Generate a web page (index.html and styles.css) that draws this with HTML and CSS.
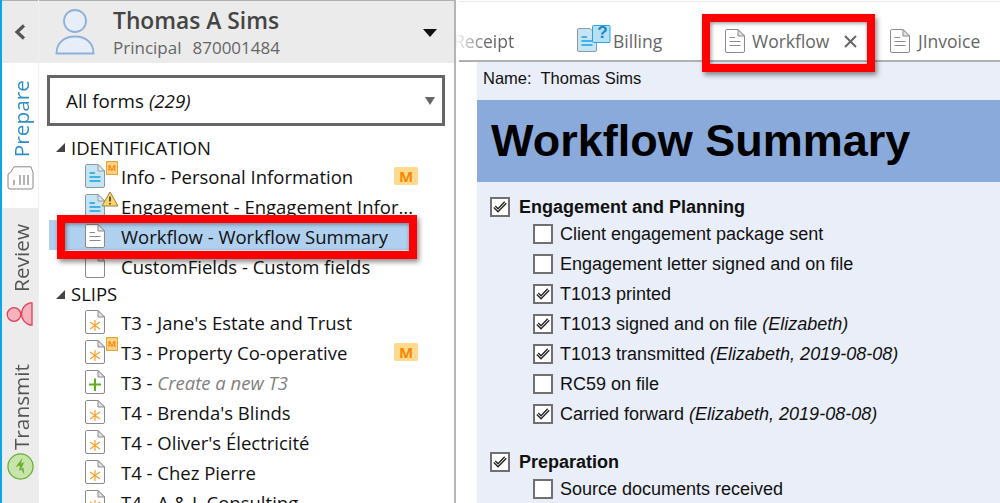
FILE: index.html
```html
<!DOCTYPE html>
<html lang="en">
<head>
<meta charset="utf-8">
<title>Workflow Summary</title>
<link rel="stylesheet" href="styles.css">
</head>
<body>
<svg class="defs" width="0" height="0" aria-hidden="true">
  <symbol id="page" viewBox="0 0 20 24"><path d="M1.500.5H13L19.500 7V22a1.500 1.500 0 0 1-1.500 1.500H2A1.500 1.500 0 0 1 .5 22V2A1.500 1.500 0 0 1 1.500.5Z" fill="#fff" stroke="#8a8a8a"/><path d="M13 .5V7H19.500Z" fill="#e4e4e4" stroke="#8a8a8a"/></symbol>
  <symbol id="page-lines" viewBox="0 0 20 24"><use href="#page"/><path d="M4.500 8.500H10M4.500 12.500H15.500M4.500 16.500H15.500" stroke="#8a8a8a" fill="none"/></symbol>
  <symbol id="page-blue" viewBox="0 0 20 24"><path d="M1.500.5H13L19.500 7V22a1.500 1.500 0 0 1-1.500 1.500H2A1.500 1.500 0 0 1 .5 22V2A1.500 1.500 0 0 1 1.500.5Z" fill="#c5e5f5" stroke="#8a9aa5"/><path d="M13 .5V7H19.500Z" fill="#e8e8e8" stroke="#8a9aa5"/><path d="M4.500 9H10M4.500 13H15.500M4.500 17H15.500" stroke="#19a0e0" stroke-width="1.300" fill="none"/></symbol>
  <symbol id="page-star" viewBox="0 0 20 24"><use href="#page"/><path d="M10 10V21M5 12L15 19M15 12L5 19" stroke="#f8a030" stroke-width="1.200" fill="none"/></symbol>
  <symbol id="page-plus" viewBox="0 0 20 24"><use href="#page"/><path d="M10 8.500V21M4 14.500H16" stroke="#5fae1e" stroke-width="2" fill="none"/></symbol>
  <symbol id="check" viewBox="0 0 14 12"><path d="M.8 6.500 5 10.800 13.300 2.200M2.300 5 5 7.700 11.700 .7" stroke="#222" stroke-width="1.300" fill="none"/></symbol>
</svg>

<div class="app">
  <nav class="rail">
    <button class="back" aria-label="Back">
      <svg width="12" height="16" viewBox="0 0 12 16"><path d="M10 1.500 3 8 10 14.500" fill="none" stroke="#555" stroke-width="3.200"/></svg>
    </button>
    <div class="rail-tab active">
      <span class="vtext">Prepare</span>
      <svg class="rail-icon" width="27" height="24" viewBox="0 0 27 24"><path d="M3.500 6.500 7 .8H24L26 6.500V21a2 2 0 0 1-2 2H3a2 2 0 0 1-2-2V8Z" fill="#fff" stroke="#888"/><path d="M7 19V14M13 19V9M17 19V9M21 19V9" stroke="#999" stroke-width="1.500" fill="none"/></svg>
    </div>
    <div class="rail-tab review">
      <span class="vtext">Review</span>
      <svg class="rail-icon" width="28" height="24" viewBox="0 0 28 24"><circle cx="8" cy="12.500" r="6.800" fill="#f6b2bd" stroke="#df4057" stroke-width="1.300"/><path d="M26 .8V23H24A11.500 11.500 0 0 1 24 .8Z" fill="#f6b2bd" stroke="#df4057" stroke-width="1.300"/></svg>
    </div>
    <div class="rail-tab transmit">
      <span class="vtext">Transmit</span>
      <svg class="rail-icon" width="27" height="27" viewBox="0 0 28 28"><circle cx="14" cy="14" r="13" fill="#c6e4ab" stroke="#6cae2e" stroke-width="1.300"/><path d="M16 5 9 14.500 13.500 13 12.500 18.500 15 17 18 22.500 17 15 14.500 16.500 18 9.500 14.500 11Z" fill="#6cae2e"/></svg>
    </div>
  </nav>

  <aside class="sidebar">
    <header class="client">
      <svg class="avatar" width="40" height="46" viewBox="0 0 40 46"><circle cx="20" cy="12" r="11" fill="#e8eef8" stroke="#8db0dc" stroke-width="1.800"/><path d="M1.500 44.500C1.500 33 10 27.500 20 27.500S38.500 33 38.500 44.500Z" fill="#e8eef8" stroke="#8db0dc" stroke-width="1.800"/></svg>
      <div class="client-text">
        <div class="client-name">Thomas A Sims</div>
        <div class="client-sub"><span>Principal</span><span>870001484</span></div>
      </div>
      <span class="client-caret"></span>
    </header>

    <div class="select">All forms <em>(229)</em><span class="select-caret"></span></div>

    <div class="tree">
      <div class="group"><span class="twist"></span>IDENTIFICATION</div>
      <div class="row"><span class="ico"><svg width="20" height="24"><use href="#page-blue"/></svg><span class="mini-m">M</span></span><span class="label">Info - Personal Information</span><span class="badge-m">M</span></div>
      <div class="row"><span class="ico"><svg width="20" height="24"><use href="#page-blue"/></svg><svg class="warn" width="18" height="16" viewBox="0 0 18 16"><path d="M9 1 17 15H1Z" fill="#ffd466" stroke="#9a8240" stroke-linejoin="round"/><path d="M9 5.500V10.500M9 12V13.500" stroke="#333" stroke-width="1.500"/></svg></span><span class="label">Engagement - Engagement Infor...</span></div>
      <div class="row selected"><span class="ico"><svg width="20" height="24"><use href="#page-lines"/></svg></span><span class="label">Workflow - Workflow Summary</span></div>
      <div class="row"><span class="ico"><svg width="20" height="24"><use href="#page"/></svg></span><span class="label">CustomFields - Custom fields</span></div>
      <div class="group slips"><span class="twist"></span>SLIPS</div>
      <div class="row"><span class="ico"><svg width="20" height="24"><use href="#page-star"/></svg></span><span class="label">T3 - Jane's Estate and Trust</span></div>
      <div class="row"><span class="ico"><svg width="20" height="24"><use href="#page-star"/></svg><span class="mini-m">M</span></span><span class="label">T3 - Property Co-operative</span><span class="badge-m">M</span></div>
      <div class="row"><span class="ico"><svg width="20" height="24"><use href="#page-plus"/></svg></span><span class="label">T3 - <em class="new">Create a new T3</em></span></div>
      <div class="row"><span class="ico"><svg width="20" height="24"><use href="#page-star"/></svg></span><span class="label">T4 - Brenda's Blinds</span></div>
      <div class="row"><span class="ico"><svg width="20" height="24"><use href="#page-star"/></svg></span><span class="label">T4 - Oliver's Électricité</span></div>
      <div class="row"><span class="ico"><svg width="20" height="24"><use href="#page-star"/></svg></span><span class="label">T4 - Chez Pierre</span></div>
      <div class="row"><span class="ico"><svg width="20" height="24"><use href="#page-star"/></svg></span><span class="label">T4 - A &amp; L Consulting</span></div>
    </div>
  </aside>

  <main class="main">
    <div class="tabs">
      <div class="tab receipt">Receipt</div>
      <div class="tab billing">
        <span class="ico-billing"><svg width="34" height="28" viewBox="0 0 34 28"><path d="M1.500 3.500H13L19.500 10V25a1.500 1.500 0 0 1-1.500 1.500H2A1.500 1.500 0 0 1 .5 25V5A1.500 1.500 0 0 1 1.500 3.500Z" fill="#c5e5f5" stroke="#8a9aa5"/><path d="M4.500 12H10M4.500 16H15.500M4.500 20H15.500" stroke="#19a0e0" stroke-width="1.300"/><rect x="15.500" y=".5" width="17.500" height="17" rx="1" fill="#b5e0f5" stroke="#2aa5e0"/></svg><span class="q">?</span></span>
        Billing
      </div>
      <div class="tab workflow"><svg width="20" height="24"><use href="#page-lines"/></svg><span>Workflow</span><svg class="close" width="13" height="13" viewBox="0 0 13 13"><path d="M1 1 12 12M12 1 1 12" stroke="#666" stroke-width="2"/></svg></div>
      <div class="tab jinvoice"><svg width="20" height="24"><use href="#page-lines"/></svg><span>JInvoice</span></div>
    </div>

    <div class="sheet">
      <div class="name-line">Name:&nbsp; Thomas Sims</div>
      <h1 class="banner">Workflow Summary</h1>

      <section class="section">
        <div class="check-group"><span class="cb on"><svg width="14" height="12"><use href="#check"/></svg></span>Engagement and Planning</div>
        <div class="check-item"><span class="cb"></span>Client engagement package sent</div>
        <div class="check-item"><span class="cb"></span>Engagement letter signed and on file</div>
        <div class="check-item"><span class="cb on"><svg width="14" height="12"><use href="#check"/></svg></span>T1013 printed</div>
        <div class="check-item"><span class="cb on"><svg width="14" height="12"><use href="#check"/></svg></span>T1013 signed and on file&nbsp;<em>(Elizabeth)</em></div>
        <div class="check-item"><span class="cb on"><svg width="14" height="12"><use href="#check"/></svg></span>T1013 transmitted&nbsp;<em>(Elizabeth, 2019-08-08)</em></div>
        <div class="check-item"><span class="cb"></span>RC59 on file</div>
        <div class="check-item"><span class="cb on"><svg width="14" height="12"><use href="#check"/></svg></span>Carried forward&nbsp;<em>(Elizabeth, 2019-08-08)</em></div>
      </section>

      <section class="section second">
        <div class="check-group"><span class="cb on"><svg width="14" height="12"><use href="#check"/></svg></span>Preparation</div>
        <div class="check-item"><span class="cb"></span>Source documents received</div>
      </section>
    </div>
  </main>
</div>

<div class="callout callout-row"></div>
<div class="callout callout-tab"></div>
</body>
</html>
```
FILE: styles.css
```css
* { box-sizing: border-box; }
html, body { margin: 0; padding: 0; }
body {
  width: 1000px;
  height: 503px;
  overflow: hidden;
  position: relative;
  background: #fff;
  font-family: "Open Sans", "Noto Sans", sans-serif;
  color: #111;
}
.defs { position: absolute; }
.app { display: flex; width: 1000px; height: 503px; overflow: hidden; }

/* Left rail */
.rail {
  width: 38px;
  flex: none;
  display: flex;
  flex-direction: column;
  border-left: 2px solid #0aa6e6;
  background: #ececec;
}
.back {
  height: 63px;
  flex: none;
  border: 0;
  padding: 0;
  background: #ebebeb;
  border-top: 1px solid #b0b0b0;
  display: flex;
  align-items: center;
  justify-content: center;
}
.rail-tab { display: flex; flex-direction: column; align-items: center; flex: none; }
.rail-tab.active { height: 145px; background: #fff; padding-top: 17px; color: #2c8fc5; }
.rail-tab.review { height: 144px; padding-top: 16px; color: #555; }
.rail-tab.transmit { flex: 1; padding-top: 12px; color: #555; }
.vtext {
  writing-mode: vertical-rl;
  transform: rotate(180deg);
  font-size: 20.800px;
  line-height: 24px;
  margin-left: 2px;
}
.rail-icon { margin-top: 10px; flex: none; }
.rail-tab.active .rail-icon { margin-top: 9px; }
.rail-tab.transmit .rail-icon { margin-top: 3px; }

/* Sidebar */
.sidebar {
  width: 418px;
  flex: none;
  border-left: 1px solid #f0f0f0;
  border-right: 2px solid #b5b5b5;
  display: flex;
  flex-direction: column;
  overflow: hidden;
}
.client {
  height: 63px;
  flex: none;
  background: #ebebeb;
  border-top: 1px solid #b0b0b0;
  display: flex;
  align-items: flex-start;
  padding: 8px 0 0 16px;
  position: relative;
}
.client-text { margin-left: 18px; margin-top: -3px; }
.client-name { font-size: 22.800px; font-weight: 600; line-height: 30px; color: #444; }
.client-sub { display: flex; gap: 11px; font-size: 17px; line-height: 22px; color: #666; margin-top: 1px; }
.client-caret {
  margin: 20px 17px 0 auto;
  border-left: 7.500px solid transparent;
  border-right: 7.500px solid transparent;
  border-top: 8px solid #111;
}

.select {
  margin: 12px 9px 0 8px;
  height: 51px;
  flex: none;
  border: 3px solid #666;
  display: flex;
  align-items: center;
  padding-left: 16px;
  font-size: 18.800px;
  gap: 5px;
  position: relative;
}
.select em { font-style: italic; }
.select-caret {
  margin-left: auto;
  margin-right: 7px;
  border-left: 5.500px solid transparent;
  border-right: 5.500px solid transparent;
  border-top: 8px solid #666;
}

.tree { padding-top: 7px; font-size: 18.500px; color: #111; }
.group { height: 28px; line-height: 30px; padding-left: 32px; position: relative; }
.group.slips { height: 24px; line-height: 24px; margin-bottom: 1px; margin-top: 1px; }
.twist {
  position: absolute;
  left: 17px;
  top: 50%;
  margin-top: -4px;
  border-left: 9px solid transparent;
  border-bottom: 9px solid #444;
}
.row {
  height: 30px;
  display: flex;
  align-items: center;
  padding-left: 46px;
  position: relative;
}
.row.selected {
  margin: 0 44px 0 10px;
  padding-left: 36px;
  background: linear-gradient(#b0d0f0 29px, transparent 29px);
  box-shadow: 0 -1px 0 #b0d0f0;
}
.ico { width: 20px; height: 24px; display: block; position: relative; flex: none; }
.ico svg { display: block; }
.label { margin-left: 16px; white-space: nowrap; }
.new { color: #808080; }
.mini-m {
  position: absolute;
  left: 21px;
  top: -3px;
  width: 12px;
  height: 14px;
  background: #ffd48a;
  border: 1px solid #f5a030;
  color: #f58a10;
  font-size: 9px;
  font-weight: 700;
  line-height: 11px;
  text-align: center;
}
.warn { position: absolute; left: 16px; top: -3px; }
.badge-m {
  position: absolute;
  left: 355px;
  top: 6px;
  width: 24px;
  height: 18px;
  background: #ffd98f;
  border-radius: 2px;
  color: #f08a00;
  font-size: 15px;
  font-weight: 700;
  line-height: 18px;
  text-align: center;
}

/* Main */
.main { flex: 1; min-width: 0; display: flex; flex-direction: column; padding-top: 1px; }
.tabs {
  height: 61px;
  flex: none;
  margin-left: 3px;
  border-top: 1px solid #eaeaea;
  border-bottom: 2px solid #b0b0b0;
  display: flex;
  align-items: center;
  font-size: 17.500px;
  color: #666;
  white-space: nowrap;
  padding-top: 20px;
}
.tab { display: flex; align-items: center; flex: none; }
.receipt {
  width: 123px;
  margin-left: -5px;
  -webkit-mask-image: linear-gradient(90deg, transparent 0, #000 34px);
  mask-image: linear-gradient(90deg, transparent 0, #000 34px);
}
.billing { width: 148px; gap: 2px; }
.ico-billing { position: relative; display: block; width: 34px; height: 28px; margin-top: -4px; }
.ico-billing svg { display: block; }
.q { position: absolute; left: 18px; top: -3px; width: 15px; text-align: center; color: #1787c8; font: 700 17px/22px "Liberation Sans", sans-serif; }
.workflow { width: 165px; }
.workflow span { margin-left: 7px; }
.close { margin-left: 15px; }
.jinvoice span { margin-left: 8px; }

.sheet { margin-left: 21px; flex: 1; background: #e9eef8; min-height: 0; font-family: "Liberation Sans", Arial, sans-serif; }
.name-line { height: 38px; padding: 7px 0 0 6px; font-size: 16.500px; line-height: 18px; color: #111; }
.banner {
  margin: 0;
  height: 82px;
  background: #8aaadb;
  color: #000;
  font-size: 45px;
  font-weight: 700;
  line-height: 82px;
  padding-left: 14px;
  white-space: nowrap;
}
.section { padding: 13px 0 0 13px; font-size: 18px; color: #111; }
.section.second { padding-top: 21px; }
.check-group { height: 24px; display: flex; align-items: center; font-weight: 700; }
.check-group .cb { margin-right: 9px; }
.check-item { height: 30px; display: flex; align-items: center; padding-left: 43px; white-space: nowrap; }
.check-item .cb { margin-right: 7px; }
.check-item em { font-style: italic; }
.cb {
  width: 20px;
  height: 20px;
  flex: none;
  background: #fff;
  border: 2.500px solid #707070;
  display: flex;
  align-items: center;
  justify-content: center;
}

/* Annotation callouts */
.callout { position: absolute; border: 8px solid #f00; box-shadow: 2px 3px 5px rgba(0,0,0,.45), inset 1px 1px 4px rgba(0,0,0,.45); }
.callout-row { left: 57px; top: 215px; width: 360px; height: 44px; }
.callout-tab { left: 702px; top: 14px; width: 173px; height: 58px; }
```
